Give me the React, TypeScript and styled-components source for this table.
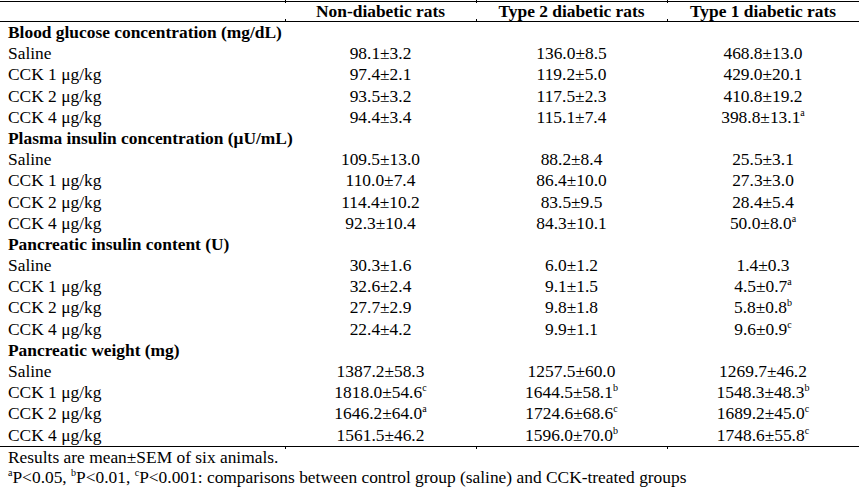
import { Fragment } from "react";
import styled, { createGlobalStyle } from "styled-components";

const GlobalStyle = createGlobalStyle`
  html, body {
    margin: 0;
    padding: 0;
    background: #fff;
  }
  body {
    font-family: "Liberation Serif", "Times New Roman", serif;
  }
`;

const Page = styled.div`
  width: 859px;
  padding-top: 1px;
  font-size: 17.4px;
  color: #000;
`;

const columns = "285px 191px 191px 192px";

const Rule = styled.div`
  height: 1px;
  background: #000;
`;

const HeadRow = styled.div`
  display: grid;
  grid-template-columns: ${columns};
  height: 19px;
`;

const HeadCell = styled.div<{ $tick?: boolean }>`
  position: relative;
  font-weight: 700;
  text-align: center;
  line-height: 19px;
  white-space: nowrap;

  &::before,
  &::after {
    content: "";
    display: ${(p) => (p.$tick ? "block" : "none")};
    position: absolute;
    left: 0;
    width: 1px;
    background: #000;
  }
  &::before {
    top: -2px;
    height: 3px;
  }
  &::after {
    bottom: 0;
    height: 2px;
  }
`;

const Body = styled.div`
  display: grid;
  grid-template-columns: ${columns};
  grid-auto-rows: 21.2px;
`;

const SectionCell = styled.div`
  grid-column: 1 / -1;
  padding-left: 8px;
  line-height: 21.2px;
  font-weight: 700;
  white-space: nowrap;
`;

const LabelCell = styled.div`
  padding-left: 8px;
  line-height: 21.2px;
  white-space: nowrap;
`;

const ValueCell = styled.div<{ $tick?: boolean }>`
  position: relative;
  line-height: 21.2px;
  text-align: center;
  white-space: nowrap;

  &::after {
    content: "";
    display: ${(p) => (p.$tick ? "block" : "none")};
    position: absolute;
    left: 0;
    bottom: -3px;
    width: 1px;
    height: 2px;
    background: #000;
  }
`;

const Sup = styled.sup`
  font-size: 10px;
  line-height: 0;
  vertical-align: 7px;
`;

const Notes = styled.div`
  padding-left: 8px;
  line-height: 20.5px;
`;

type Value = [string, string?];

interface Group {
  title: string;
  rows: { label: string; values: Value[] }[];
}

const doses = ["Saline", "CCK 1 μg/kg", "CCK 2 μg/kg", "CCK 4 μg/kg"];

const groups: Group[] = [
  {
    title: "Blood glucose concentration (mg/dL)",
    rows: [
      [["98.1±3.2"], ["136.0±8.5"], ["468.8±13.0"]],
      [["97.4±2.1"], ["119.2±5.0"], ["429.0±20.1"]],
      [["93.5±3.2"], ["117.5±2.3"], ["410.8±19.2"]],
      [["94.4±3.4"], ["115.1±7.4"], ["398.8±13.1", "a"]],
    ].map((values, i) => ({ label: doses[i], values: values as Value[] })),
  },
  {
    title: "Plasma insulin concentration (μU/mL)",
    rows: [
      [["109.5±13.0"], ["88.2±8.4"], ["25.5±3.1"]],
      [["110.0±7.4"], ["86.4±10.0"], ["27.3±3.0"]],
      [["114.4±10.2"], ["83.5±9.5"], ["28.4±5.4"]],
      [["92.3±10.4"], ["84.3±10.1"], ["50.0±8.0", "a"]],
    ].map((values, i) => ({ label: doses[i], values: values as Value[] })),
  },
  {
    title: "Pancreatic insulin content (U)",
    rows: [
      [["30.3±1.6"], ["6.0±1.2"], ["1.4±0.3"]],
      [["32.6±2.4"], ["9.1±1.5"], ["4.5±0.7", "a"]],
      [["27.7±2.9"], ["9.8±1.8"], ["5.8±0.8", "b"]],
      [["22.4±4.2"], ["9.9±1.1"], ["9.6±0.9", "c"]],
    ].map((values, i) => ({ label: doses[i], values: values as Value[] })),
  },
  {
    title: "Pancreatic weight (mg)",
    rows: [
      [["1387.2±58.3"], ["1257.5±60.0"], ["1269.7±46.2"]],
      [["1818.0±54.6", "c"], ["1644.5±58.1", "b"], ["1548.3±48.3", "b"]],
      [["1646.2±64.0", "a"], ["1724.6±68.6", "c"], ["1689.2±45.0", "c"]],
      [["1561.5±46.2"], ["1596.0±70.0", "b"], ["1748.6±55.8", "c"]],
    ].map((values, i) => ({ label: doses[i], values: values as Value[] })),
  },
];

function App() {
  return (
    <>
      <GlobalStyle />
      <Page>
        <Rule />
        <HeadRow>
          <HeadCell />
          <HeadCell $tick>Non-diabetic rats</HeadCell>
          <HeadCell $tick>Type 2 diabetic rats</HeadCell>
          <HeadCell $tick>Type 1 diabetic rats</HeadCell>
        </HeadRow>
        <Rule />
        <Body>
          {groups.map((group, gi) => (
            <Fragment key={group.title}>
              <SectionCell>{group.title}</SectionCell>
              {group.rows.map((row, ri) => {
                const last = gi === groups.length - 1 && ri === group.rows.length - 1;
                return (
                  <Fragment key={row.label}>
                    <LabelCell>{row.label}</LabelCell>
                    {row.values.map(([v, s], vi) => (
                      <ValueCell key={vi} $tick={last}>
                        {v}
                        {s && <Sup>{s}</Sup>}
                      </ValueCell>
                    ))}
                  </Fragment>
                );
              })}
            </Fragment>
          ))}
        </Body>
        <Rule />
        <Notes>
          <div>Results are mean±SEM of six animals.</div>
          <div>
            <Sup>a</Sup>P&lt;0.05, <Sup>b</Sup>P&lt;0.01, <Sup>c</Sup>P&lt;0.001: comparisons
            between control group (saline) and CCK-treated groups
          </div>
        </Notes>
      </Page>
    </>
  );
}

export default App;
